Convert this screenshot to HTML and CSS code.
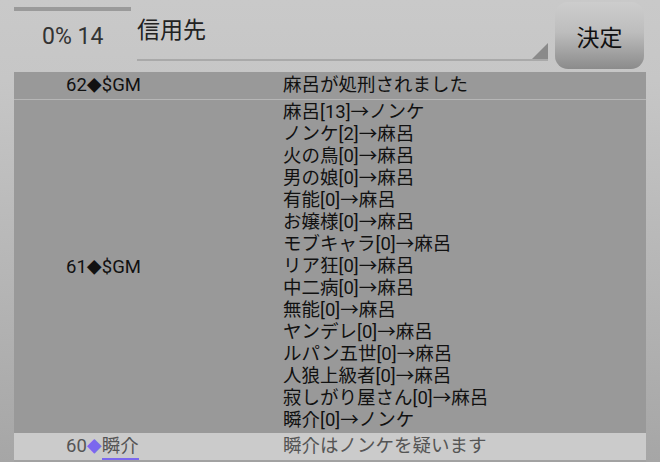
FILE: index.html
```html
<!DOCTYPE html>
<html lang="ja">
<head>
    <meta charset="UTF-8">
    <meta name="viewport" content="width=device-width, initial-scale=1.0">
    <title>ログ</title>
    <link rel="stylesheet" href="styles.css">
</head>
<body>

    <div class="page">
        <div class="header">
            <div class="status">
                <div class="progress"></div>
                <div class="count">0% 14</div>
            </div>
            <div class="spinner">
                <span class="spinner-text">信用先</span>
                <span class="spinner-arrow"></span>
            </div>
            <button class="decide">決定</button>
        </div>

        <table class="log">
            <tr class="row dark first">
                <td class="who">62<span class="dia">◆</span>$GM</td>
                <td class="msg">麻呂が処刑されました</td>
            </tr>
            <tr class="row dark votes">
                <td class="who">61<span class="dia">◆</span>$GM</td>
                <td class="msg">
                    <div>麻呂[13]→ノンケ</div>
                    <div>ノンケ[2]→麻呂</div>
                    <div>火の鳥[0]→麻呂</div>
                    <div>男の娘[0]→麻呂</div>
                    <div>有能[0]→麻呂</div>
                    <div>お嬢様[0]→麻呂</div>
                    <div>モブキャラ[0]→麻呂</div>
                    <div>リア狂[0]→麻呂</div>
                    <div>中二病[0]→麻呂</div>
                    <div>無能[0]→麻呂</div>
                    <div>ヤンデレ[0]→麻呂</div>
                    <div>ルパン五世[0]→麻呂</div>
                    <div>人狼上級者[0]→麻呂</div>
                    <div>寂しがり屋さん[0]→麻呂</div>
                    <div>瞬介[0]→ノンケ</div>
                </td>
            </tr>
            <tr class="row light">
                <td class="who">60<span class="dia mark">◆</span><span class="name">瞬介</span></td>
                <td class="msg">瞬介はノンケを疑います</td>
            </tr>
            <tr class="row rest">
                <td></td>
                <td></td>
            </tr>
        </table>
    </div>

</body>
</html>
```

FILE: styles.css
```css
body {
    margin: 0;
    height: 462px;
    overflow: hidden;
    background: linear-gradient(#c9c9c9 0, #c6c6c6 80px, #a6a6a6 462px);
    font-family: Roboto, 'Noto Sans CJK JP', sans-serif;
}
.page {
    padding: 0 14px;
}
.header {
    display: flex;
    height: 72px;
}
.status {
    width: 123px;
}
.progress {
    margin-top: 7px;
    width: 117px;
    height: 4px;
    background-color: #9a9a9a;
}
.count {
    padding: 12px 0 0 28px;
    font-size: 23px;
    line-height: 28px;
    color: #333;
}
.spinner {
    position: relative;
    width: 411px;
    height: 59px;
    border-bottom: 2px solid #a9a9a9;
}
.spinner-text {
    display: block;
    padding-top: 16px;
    font-size: 23px;
    line-height: 30px;
    color: #222;
}
.spinner-arrow {
    position: absolute;
    right: 0;
    bottom: 0;
    width: 0;
    height: 0;
    border-left: 16px solid transparent;
    border-bottom: 16px solid #8a8a8a;
}
.decide {
    margin: 2px 0 0 7px;
    width: 89px;
    height: 67px;
    border: none;
    border-radius: 13px;
    background: linear-gradient(#cdcdcd 0%, #bdbdbd 45%, #8b8b8b 100%);
    font-family: 'Noto Sans CJK JP', sans-serif;
    font-size: 23px;
    color: #111;
    padding: 0;
}
.log {
    width: 632px;
    border-collapse: collapse;
    font-size: 18.5px;
    color: #111;
}
.log td {
    padding: 0;
}
.who {
    width: 217px;
    padding-left: 52px !important;
    vertical-align: middle;
    white-space: nowrap;
}
.dia {
    font-size: 15px;
}
.msg {
    vertical-align: top;
}
.dark {
    background-color: #999;
}
.first td {
    height: 26px;
    line-height: 26px;
    border-bottom: 1px solid #b6b6b6;
}
.votes .msg {
    padding: 1px 0 2px 0;
}
.votes .msg div {
    line-height: 22px;
    height: 22px;
}
.light {
    background-color: #cbcbcb;
    color: #555;
}
.light td {
    height: 26px;
    line-height: 26px;
    border-bottom: 2px solid #a2a2a2;
}
.mark {
    color: #7b68ee;
}
.name {
    border-bottom: 2px solid #7b68ee;
    line-height: 20px;
    display: inline-block;
    height: 22px;
}
.rest td {
    height: 10px;
    background-color: #c6c6c6;
}
```
